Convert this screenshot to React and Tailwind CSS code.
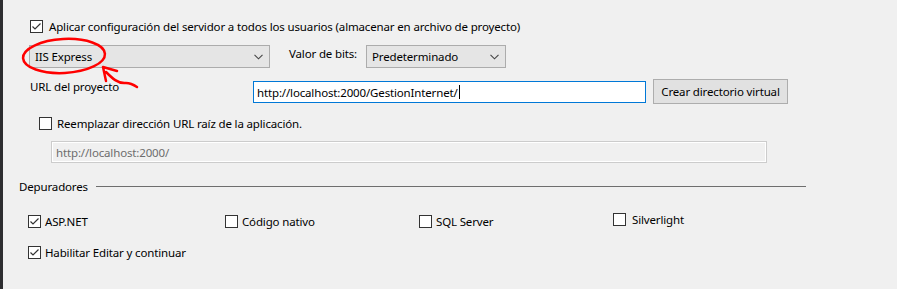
function Checkbox({ checked }) {
  return (
    <div className="w-[13px] h-[13px] border border-[#333333] bg-white shrink-0 flex items-center justify-center">
      {checked && (
        <svg width="11" height="11" viewBox="0 0 11 11">
          <polyline points="1.5,5.5 4,8 9.5,2.5" fill="none" stroke="#333333" strokeWidth="1.2" />
        </svg>
      )}
    </div>
  );
}

function Combo({ value, width }) {
  return (
    <div className={`${width} h-[23px] bg-[#e5e5e5] border border-[#acacac] flex items-center justify-between pl-[5px] pr-[6px]`}>
      <span>{value}</span>
      <svg width="9" height="6" viewBox="0 0 9 6">
        <polyline points="0.5,0.8 4.5,4.8 8.5,0.8" fill="none" stroke="#444444" strokeWidth="1.1" />
      </svg>
    </div>
  );
}

function CheckItem({ checked, label, className = "" }) {
  return (
    <div className={`flex items-center gap-[4px] ${className}`}>
      <Checkbox checked={checked} />
      <span>{label}</span>
    </div>
  );
}

export default function App() {
  return (
    <div className="relative w-[897px] h-[289px] bg-[#f0f0f0] border-l-[3px] border-[#2d2d30] text-[11.5px] tracking-[-0.15px] leading-[15px] text-black font-['Noto_Sans',sans-serif] overflow-hidden">
      <div className="flex flex-col pt-[20px]">
        <div className="flex items-center gap-[6px] ml-[27px] h-[13px]">
          <Checkbox checked />
          <span>Aplicar configuración del servidor a todos los usuarios (almacenar en archivo de proyecto)</span>
        </div>

        <div className="flex items-center mt-[12px] ml-[26px] h-[23px]">
          <Combo value="IIS Express" width="w-[241px]" />
          <span className="ml-[19px] w-[77px] -mt-[6px]">Valor de bits:</span>
          <Combo value="Predeterminado" width="w-[140px]" />
        </div>

        <div className="flex items-start mt-[11px] ml-[27px] h-[25px]">
          <span className="w-[223px] mt-[0px]">URL del proyecto</span>
          <div className="w-[393px] h-[22px] mt-[2px] bg-white border border-[#0078d7] flex items-center pl-[3px]">
            <span>http://localhost:2000/GestionInternet/</span>
            <span className="w-px h-[14px] bg-black ml-px"></span>
          </div>
          <button className="ml-[7px] w-[135px] h-[25px] bg-[#e1e1e1] border border-[#adadad]">
            Crear directorio virtual
          </button>
        </div>

        <div className="flex items-center gap-[5px] mt-[13px] ml-[36px] h-[13px]">
          <Checkbox />
          <span>Reemplazar dirección URL raíz de la aplicación.</span>
        </div>

        <div className="mt-[11px] ml-[48px] w-[716px] h-[22px] border border-[#cccccc] flex">
          <div className="flex-1 border border-white flex items-center pl-[3px] text-[#6d6d6d]">
            http://localhost:2000/
          </div>
        </div>

        <div className="flex items-center mt-[16px] ml-[16px] h-[14px]">
          <span className="w-[77px]">Depuradores</span>
          <div className="w-[710px] h-px bg-[#6e6e6e]"></div>
        </div>

        <div className="flex items-start mt-[22px] ml-[25px] h-[13px]">
          <CheckItem checked label="ASP.NET" className="w-[197px] h-[13px]" />
          <CheckItem label="Código nativo" className="w-[194px] h-[13px]" />
          <CheckItem label="SQL Server" className="w-[194px] h-[13px]" />
          <CheckItem label="Silverlight" className="-mt-[2px] gap-[6px] h-[13px]" />
        </div>

        <div className="flex mt-[18px] ml-[25px] h-[13px]">
          <CheckItem checked label="Habilitar Editar y continuar" className="h-[13px]" />
        </div>
      </div>

      <svg className="absolute left-[-3px] top-0 pointer-events-none" width="897" height="289" viewBox="0 0 897 289">
        <ellipse cx="64" cy="56" rx="41" ry="17" fill="none" stroke="#ff0000" strokeWidth="2.5" transform="rotate(-3 64 56)" />
        <path d="M103 67 L117 71 M103 67 L106 81 M106 72 C112 78 118 84 126 83 C131 83 134 85 137 87" fill="none" stroke="#ff0000" strokeWidth="2.5" strokeLinecap="round" strokeLinejoin="round" />
      </svg>
    </div>
  );
}
